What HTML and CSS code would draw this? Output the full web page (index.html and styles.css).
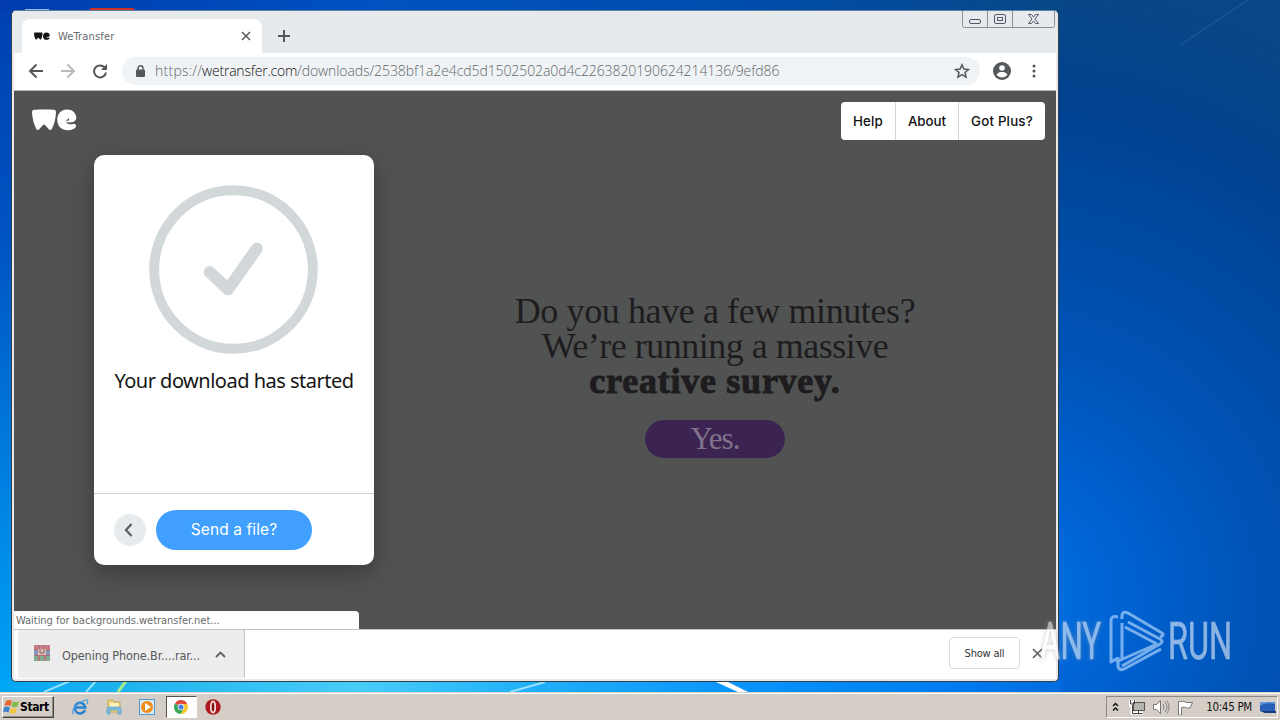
FILE: index.html
```html
<!DOCTYPE html>
<html lang="en">
<head>
<meta charset="utf-8">
<title>WeTransfer</title>
<link rel="stylesheet" href="styles.css">
</head>
<body>
<div class="desktop">
  <svg class="wallpaper" width="1280" height="692" viewBox="0 0 1280 692">
    <defs>
      <linearGradient id="left" x1="0" y1="0" x2="0" y2="1"><stop offset="0" stop-color="#0040b0"/><stop offset=".35" stop-color="#0054c2"/><stop offset=".7" stop-color="#0080e2"/><stop offset="1" stop-color="#00a4f6"/></linearGradient>
      <radialGradient id="right" gradientUnits="userSpaceOnUse" cx="1000" cy="600" r="620"><stop offset="0" stop-color="#0074e8"/><stop offset=".15" stop-color="#0066d8"/><stop offset=".4" stop-color="#0054b8"/><stop offset=".8" stop-color="#004290"/><stop offset="1" stop-color="#084786"/></radialGradient>
      <linearGradient id="top" x1="0" y1="0" x2="1" y2="0"><stop offset="0" stop-color="#003cb0"/><stop offset=".35" stop-color="#0052c0"/><stop offset=".7" stop-color="#004dac"/><stop offset="1" stop-color="#074886"/></linearGradient>
      <linearGradient id="bottom" x1="0" y1="0" x2="1" y2="0"><stop offset="0" stop-color="#00a6f4"/><stop offset=".12" stop-color="#20b4ee"/><stop offset=".34" stop-color="#48cdf8"/><stop offset=".5" stop-color="#20b0f8"/><stop offset=".7" stop-color="#0894fa"/><stop offset=".9" stop-color="#007cf0"/><stop offset="1" stop-color="#006be0"/></linearGradient>
    </defs>
    <rect width="640" height="692" fill="url(#left)"/>
    <rect x="640" width="640" height="692" fill="url(#right)"/>
    <rect width="1062" height="11" fill="url(#top)"/>
    <rect y="681" width="1062" height="11" fill="url(#bottom)"/>
    <path d="M1180 45 1248 0" stroke="#3b70a8" stroke-width="2" opacity=".3"/>
    <path d="M44 692 70 681M86 692 96 681M510 692 545 682" stroke="#b8ecff" stroke-width="2" opacity=".8"/>
    <path d="M118 692 126 681" stroke="#a8ec90" stroke-width="3"/>
    <path d="M716 682h12l20 10h-10z" fill="#fff"/>
    <rect x="90" y="8" width="44" height="4" fill="#cc3128"/>
    <rect x="25" y="9" width="24" height="1" fill="#93b7dd"/>
  </svg>

  <main class="window">
    <header class="tabstrip">
      <div class="tab">
        <svg class="favicon" width="16" height="11" viewBox="0 0 45 24"><use href="#we"/></svg>
        <span class="tab-title">WeTransfer</span>
        <svg width="10" height="10" viewBox="0 0 10 10"><path d="m1 1 8 8M9 1 1 9" stroke="#5a5e61" stroke-width="1.6"/></svg>
      </div>
      <svg class="newtab" width="12" height="12" viewBox="0 0 12 12"><path d="M6 0v12M0 6h12" stroke="#54585b" stroke-width="2"/></svg>
      <svg class="controls" width="93" height="17" viewBox="0 0 93 17" fill="none" stroke="#8b8f9b">
        <path d="M.5 0v14.5q0 2 2 2h88q2 0 2-2V0M25.500 0v16M50.500 0v16"/>
        <g stroke="#555766"><rect x="7.500" y="8.500" width="11" height="4" rx="1.500"/><rect x="32.500" y="3.500" width="11" height="9" rx="1.500"/><rect x="35.500" y="6.500" width="5" height="3"/><path d="M66.500 3.500h3l2 2.500 2-2.500h3l-3.500 4.500 3.500 4.500h-3l-2-2.500-2 2.500h-3L70 8z"/></g>
      </svg>
    </header>

    <nav class="toolbar">
      <svg class="nav-icons" width="80" height="16" viewBox="0 0 80 16" fill="none" stroke="#54585b" stroke-width="2">
        <path d="M15 8H2M8.500 1.500 2 8l6.500 6.500"/>
        <path d="M33 8h13M39.500 1.500 46 8l-6.500 6.500" stroke="#b9bcbe"/>
        <path d="M76.500 4.300A6 6 0 1 0 78 9.500"/><path d="M79 1v6h-6z" fill="#54585b" stroke="none"/>
      </svg>
      <div class="omnibox">
        <svg width="10" height="12" viewBox="0 0 10 12"><rect x="1" y="4.500" width="9" height="7.500" rx="1" fill="#54585b"/><path d="M3 5V3.300a2.500 2.500 0 0 1 5 0V5" fill="none" stroke="#54585b" stroke-width="1.400"/></svg>
        <span class="url"><span class="scheme">https://</span><span class="host">wetransfer.com</span><span class="path">/downloads/2538bf1a2e4cd5d1502502a0d4c2263820190624214136/9efd86</span></span>
        <svg class="star" width="16" height="16" viewBox="0 0 16 16"><path d="m8 1.800 1.900 4.300 4.600.4-3.500 3 1.100 4.600L8 11.700l-4.100 2.400L5 9.500l-3.500-3 4.600-.4z" fill="none" stroke="#54585b" stroke-width="1.500"/></svg>
      </div>
      <svg class="account" width="18" height="18" viewBox="0 0 18 18"><circle cx="9" cy="9" r="9" fill="#54585b"/><circle cx="9" cy="6" r="2.800" fill="#fff"/><path d="M3.500 12.800C4.500 10.500 7 10 9 10s4.500.5 5.500 2.800C13 14.800 11 15.500 9 15.500s-4-.7-5.500-2.700z" fill="#fff"/></svg>
      <svg width="4" height="14" viewBox="0 0 4 14" fill="#54585b"><circle cx="2" cy="2" r="1.500"/><circle cx="2" cy="7" r="1.500"/><circle cx="2" cy="12" r="1.500"/></svg>
    </nav>

    <section class="page">
      <div class="page-head">
        <svg class="logo" width="45" height="22" viewBox="0 0 45 22" fill="#fff">
          <g id="we"><path d="M0 3Q0 .8 2.500.8C8 .3 16 .3 22 .8Q24.300 1 24 3.500C23.700 10 22 16 19.800 20Q18.300 22 16.600 20L13 16Q12 15 11 16L7.500 20Q5.800 22 4.300 20C1.700 15 .3 9 0 3z"/><path d="M35 .5C29 .5 25.300 5 25.300 11S29.500 21.300 35.500 21.300C40 21.300 43.800 19.500 44 17 44.200 15.500 43 14.800 41.500 14.800 38.500 16 35 15.300 34 12.500Q36 14 39.500 13.200C43 12.800 44.600 11 44.300 8 43.500 3.500 40.500.5 35 .5z"/></g>
          <path class="logo-eye" d="M33.300 10.800q2.500.5 3.200-1.800 1.200 1.500.2 2.600-1.500.8-3.400-.8z"/>
        </svg>
        <div class="menu"><a class="menu-item help">Help</a><a class="menu-item about">About</a><a class="menu-item plus">Got Plus?</a></div>
      </div>
      <div class="page-body">
        <article class="card">
          <div class="card-main">
            <svg class="check" width="169" height="169" viewBox="0 0 170 170" fill="none" stroke="#d2d7da"><circle cx="85" cy="85" r="79.800" stroke-width="10"/><path d="m61 87.500 18.500 17.500L108.500 64" stroke-width="12" stroke-linecap="round" stroke-linejoin="round"/></svg>
            <h1 class="card-title">Your download has started</h1>
          </div>
          <footer class="card-foot">
            <span class="back"><svg width="10" height="14" viewBox="0 0 10 14"><path d="M7.500 1 2 7l5.500 6" fill="none" stroke="#5e6265" stroke-width="2.300"/></svg></span>
            <span class="send">Send a file?</span>
          </footer>
        </article>
        <div class="survey">
          <p class="line first">Do you have a few minutes?</p>
          <p class="line second">We’re running a massive</p>
          <p class="line bold">creative survey.</p>
          <span class="yes">Yes.</span>
        </div>
      </div>
      <div class="status">Waiting for backgrounds.wetransfer.net...</div>
    </section>

    <footer class="shelf">
      <div class="download">
        <svg class="archive" width="16" height="16" viewBox="0 0 16 16"><rect width="16" height="5" fill="#c87d88"/><rect y="5" width="16" height="5" fill="#8596be"/><rect y="10" width="16" height="6" fill="#81ae91"/><path d="M0 5h16M0 10.500h16" stroke="#a96976"/><path d="M5 0v16M11 0v16" stroke="#b6787c" stroke-width="2"/><rect x="4" y="4" width="8" height="6" fill="#d9c0b0"/><path d="M6 4v4h4V4" fill="none" stroke="#8d6571"/></svg>
        <span class="file">Opening Phone.Br....rar...</span>
        <svg width="11" height="7" viewBox="0 0 11 7"><path d="m1 6 4.500-4.500L10 6" fill="none" stroke="#5c6063" stroke-width="1.800"/></svg>
      </div>
      <span class="showall">Show all</span>
      <svg class="dismiss" width="11" height="11" viewBox="0 0 11 11"><path d="m1 1 9 9M10 1 1 10" stroke="#5c6063" stroke-width="1.700"/></svg>
    </footer>
  </main>

  <svg class="watermark" width="220" height="80" viewBox="0 0 220 80">
    <g class="brand"><text x="6" y="55" textLength="61" lengthAdjust="spacingAndGlyphs" class="mark-shadow">ANY</text><text x="134" y="55" textLength="64" lengthAdjust="spacingAndGlyphs">RUN</text></g>
    <path d="M84 13q-7-2-7 4v41l7-4M88 56V19M84 53v10q2 4 6 2l37-20M91 23l32 17M123 40 82 58M88 15q-1-9 6-6l34 20q3 2-2 4M94 18l32 17q4 2 0 5L88 62" fill="none" stroke="#b5d8ff" stroke-width="3" stroke-linejoin="round" opacity=".65"/>
  </svg>

  <footer class="taskbar">
    <div class="start"><svg width="17" height="16" viewBox="0 0 17 16"><path d="M3 2q3-2 6 0L7.500 7q-3-1.500-6 0z" fill="#e5682c"/><path d="M10 2.500q3 1.500 6 0l-1.500 5q-3 1.500-6 0z" fill="#83b948"/><path d="M1 8.500q3-2 6 0l-1.500 5q-3-1.500-5.500 0z" fill="#3c83c9"/><path d="M8 9q3 1.500 6 0l-1.500 5q-3 1.500-6 0z" fill="#f3c43c"/></svg><b>Start</b></div>
    <div class="pins">
      <svg width="18" height="18" viewBox="0 0 18 18"><path d="M14 12A5.300 5.300 0 1 1 14.300 9.500H5" fill="none" stroke="#2683d1" stroke-width="2.600"/><path d="M2.500 16C-1 14 5 5 15 2q3-1 1 4" fill="none" stroke="#4b9de0" stroke-width="1.300"/></svg>
      <svg width="18" height="18" viewBox="0 0 18 18"><path d="M3 2h5l1 2h6v10H3z" fill="#efd483" stroke="#c8a74e"/><path d="M5 5h9v5H5z" fill="#fff3bd"/><path d="M2 16v-5q0-2 2-2h10q2 0 2 2v5h-3v-4H5v4z" fill="#7fbddf" stroke="#589dc4" stroke-width=".7"/></svg>
      <svg width="18" height="18" viewBox="0 0 18 18"><rect x="1.500" y="1.500" width="15" height="15" fill="#d7e9f5" stroke="#5796c8"/><circle cx="9" cy="9" r="6" fill="#f28c18"/><path d="m7 5 6 4-6 4z" fill="#fff"/></svg>
      <span class="active"><svg width="14" height="14" viewBox="0 0 14 14"><path d="M7 7 .9 3.500A7 7 0 0 1 13.100 3.500z" fill="#df4538"/><path d="M7 7 .9 3.500A7 7 0 0 0 6.500 14L10 9z" fill="#36a853"/><path d="M7 4h6.300A7 7 0 0 1 6.500 14L10 8.500z" fill="#f5c52e"/><circle cx="7" cy="7" r="3.300" fill="#fff"/><circle cx="7" cy="7" r="2.600" fill="#4780db"/></svg></span>
      <svg width="16" height="16" viewBox="0 0 16 16"><circle cx="8" cy="8" r="7.700" fill="#ae171d"/><ellipse cx="8" cy="8" rx="2.200" ry="5.500" fill="#831015" stroke="#f6dedd" stroke-width="1.800"/></svg>
    </div>
    <div class="tray">
      <svg width="7" height="10" viewBox="0 0 7 10"><path d="m1 4 2.500-2.500L6 4M1 8.500 3.500 6 6 8.500" fill="none" stroke="#111" stroke-width="1.500"/></svg>
      <svg class="network" width="17" height="16" viewBox="0 0 17 16"><path d="M1 1v4q0 2 2 2t2-2V1M3 7v7h11M9 12v2" fill="none" stroke="#fff" stroke-width="3"/><rect x="4.500" y="3.500" width="11" height="8" fill="#b4b3b0" stroke="#555"/><path d="M1.500 1v4h4V1M3.500 6v8.500h10M9.500 12v2" fill="none" stroke="#444"/></svg>
      <svg class="sound" width="17" height="14" viewBox="0 0 17 14"><path d="M.5 4.500h3l4-4v13l-4-4h-3z" fill="#fff" stroke="#777"/><path d="M10 4q2 3 0 6M12 2q4 5 0 10M14 .5q4 6.500 0 13" fill="none" stroke="#888"/></svg>
      <svg class="flag" width="17" height="15" viewBox="0 0 17 15"><path d="M1.500 15V1.500h2q3-1 6 1h6l-2.500 5.500H9.500q-2-1.500-5-.5v7.500z" fill="#fff" stroke="#777"/></svg>
      <span class="clock">10:45 PM</span>
      <svg width="16" height="13" viewBox="0 0 16 13"><path d="M0 1h15v9H0z" fill="#295fb6"/><path d="M0 5Q5 1 15 3V1H0z" fill="#5b94db"/><path d="M0 10h16v2H5z" fill="#183d7c"/></svg>
    </div>
  </footer>
</div>
</body>
</html>
```

FILE: styles.css
```css
* { box-sizing: border-box; }
body { margin: 0; overflow: hidden; font-family: "DejaVu Sans Condensed", "DejaVu Sans", sans-serif; }
svg { display: block; flex: none; }
span, a, b, p, h1 { white-space: nowrap; }
.desktop { position: relative; width: 1280px; height: 720px; display: flex; flex-direction: column; padding: 10px 0 0 11px; background: #0050b0; overflow: hidden; }
.wallpaper { position: absolute; left: 0; top: 0; }
.window { position: relative; width: 1048px; height: 672px; border: 1px solid #343e48; border-radius: 5px; padding: 0 2px 2px; background: #e9e9ec; display: flex; flex-direction: column; overflow: hidden; border-top-color: #6180a4; }
.tabstrip { height: 42px; display: flex; align-items: flex-start; background: #e7eaed; }
.tab { width: 240px; height: 34px; margin: 8px 0 0 8px; padding: 0 11px 0 12px; display: flex; align-items: center; border-radius: 8px 8px 0 0; background: #fff; }
.favicon { fill: #151515; }
.tab-title { flex: 1; margin-left: 8px; font-size: 11px; color: #66696c; letter-spacing: .15px; }
.newtab { margin: 19px 0 0 16px; }
.controls { margin: 0 1px 0 auto; }
.toolbar { height: 38px; display: flex; align-items: center; padding: 0 19px 1px 14px; background: #fff; border-bottom: 1px solid #b8babb; }
.nav-icons { width: 80px; }
.omnibox { width: 858px; height: 28px; margin-left: 14px; padding: 0 10px 0 13px; border-radius: 14px; display: flex; align-items: center; background: #f0f3f5; }
.url { margin: -2px 0 0 10px; display: flex; font: 300 14px "Open Sans", sans-serif; color: #626669; }
.scheme { width: 47px; letter-spacing: .25px; }
.host { width: 95px; color: #111; letter-spacing: -.2px; }
.path { letter-spacing: -.09px; }
.star { margin-left: auto; }
.account { margin: 0 21px 0 13px; }
.page { position: relative; height: 538px; background: #505352; }
.page-head { height: 64px; display: flex; justify-content: space-between; align-items: flex-start; padding: 11px 11px 0 18px; }
.logo { margin-top: 7px; }
.logo-eye { fill: #505352; }
.menu { display: flex; height: 38px; border-radius: 4px; overflow: hidden; background: #fff; }
.menu-item { display: flex; align-items: center; justify-content: center; border-left: 1px solid #d2d4d5; font: 500 13.3px Inter, sans-serif; color: #111; }
.help { width: 54px; border: 0; letter-spacing: .2px; }
.about { width: 63px; }
.plus { width: 87px; letter-spacing: .2px; }
.page-body { display: flex; }
.card { width: 280px; height: 410px; margin-left: 80px; border-radius: 10px; background: #fff; box-shadow: 0 8px 26px rgba(0,0,0,.28); }
.card-main { height: 338px; padding-top: 30px; display: flex; flex-direction: column; align-items: center; }
.check { margin-right: 1px; }
.card-title { margin: 11px 0 0; font: 400 20px/32px "Noto Sans", sans-serif; letter-spacing: -.5px; color: #151515; }
.card-foot { height: 72px; border-top: 1px solid #d0d3d5; display: flex; align-items: center; padding-left: 20px; }
.back { width: 32px; height: 32px; padding-right: 2px; border-radius: 50%; background: #e8ebed; display: flex; align-items: center; justify-content: center; }
.send { width: 156px; height: 40px; margin-left: 10px; border-radius: 20px; background: #409fff; color: #fff; display: flex; align-items: center; justify-content: center; font: 400 15.5px Inter, sans-serif; letter-spacing: .1px; }
.survey { width: 420px; margin: 139px 0 0 131px; display: flex; flex-direction: column; align-items: center; color: #1e1c1e; font-family: "Liberation Serif", serif; }
.line { margin: 0; font-size: 36px; line-height: 35px; }
.first { letter-spacing: -.4px; }
.second { letter-spacing: -.5px; }
.bold { font-weight: 700; letter-spacing: .75px; -webkit-text-stroke: 1px #1e1c1e; }
.yes { width: 140px; height: 38px; margin-top: 21px; border-radius: 19px; background: #3b2452; color: #81738a; display: flex; align-items: center; justify-content: center; font-size: 31px; letter-spacing: -1px; }
.status { position: absolute; left: 0; bottom: 0; width: 345px; height: 18px; border-radius: 0 4px 0 0; background: #fff; color: #686b6d; padding-left: 2px; font-size: 11px; line-height: 19px; white-space: nowrap; letter-spacing: -.03px; }
.shelf { height: 50px; border-top: 1px solid #bfc1c2; background: #fff; display: flex; align-items: center; padding: 0 13px 1px 4px; }
.download { width: 227px; height: 48px; display: flex; align-items: center; padding: 0 18px 0 16px; border-right: 1px solid #c6c6c6; background: #ededed; }
.archive { margin-bottom: 2px; }
.file { flex: 1; margin: 3px 0 0 12px; font-size: 12.5px; letter-spacing: -.1px; color: #55585a; }
.showall { width: 71px; height: 32px; margin: 0 12px 2px auto; border: 1px solid #dadcdf; border-radius: 4px; display: flex; align-items: center; justify-content: center; font-size: 11px; letter-spacing: -.2px; color: #333; }
.dismiss { margin-bottom: 2px; }
.watermark { position: absolute; left: 1034px; top: 604px; }
.brand { font: 51px Roboto, "Liberation Sans Narrow", sans-serif; fill: #fff; stroke: #fff; stroke-width: .6px; opacity: .55; }
.mark-shadow { filter: drop-shadow(0 0 2px #999); }
.taskbar { position: absolute; left: 0; bottom: 0; width: 1280px; height: 28px; border-top: 1px solid #d6d2ca; box-shadow: inset 0 1px #fff; background: #d5cec6; display: flex; align-items: center; padding: 1px 2px 0; }
.start { width: 52px; height: 22px; border: 1px solid; border-color: #fff #444 #444 #fff; box-shadow: inset -1px -1px #8e8982; display: flex; align-items: center; gap: 0; font-size: 12px; letter-spacing: -.4px; color: #000; }
.pins { display: flex; align-items: center; margin-left: 17px; gap: 15.500px; }
.active { width: 31px; height: 22px; margin: 0 -7px 0 -6px; border: 1px solid; border-color: #55514c #fff #fff #55514c; background: #fff; display: flex; align-items: center; justify-content: center; }
.tray { width: 172px; height: 22px; margin-left: auto; border: 1px solid; border-color: #8e8982 #fff #fff #8e8982; display: flex; align-items: center; padding: 0 1px 0 5px; }
.network { margin-left: 10px; }
.sound { margin-left: 7px; }
.flag { margin-left: 7px; }
.clock { margin: 0 8px 0 auto; font-size: 11.5px; letter-spacing: -.3px; color: #111; }
```
